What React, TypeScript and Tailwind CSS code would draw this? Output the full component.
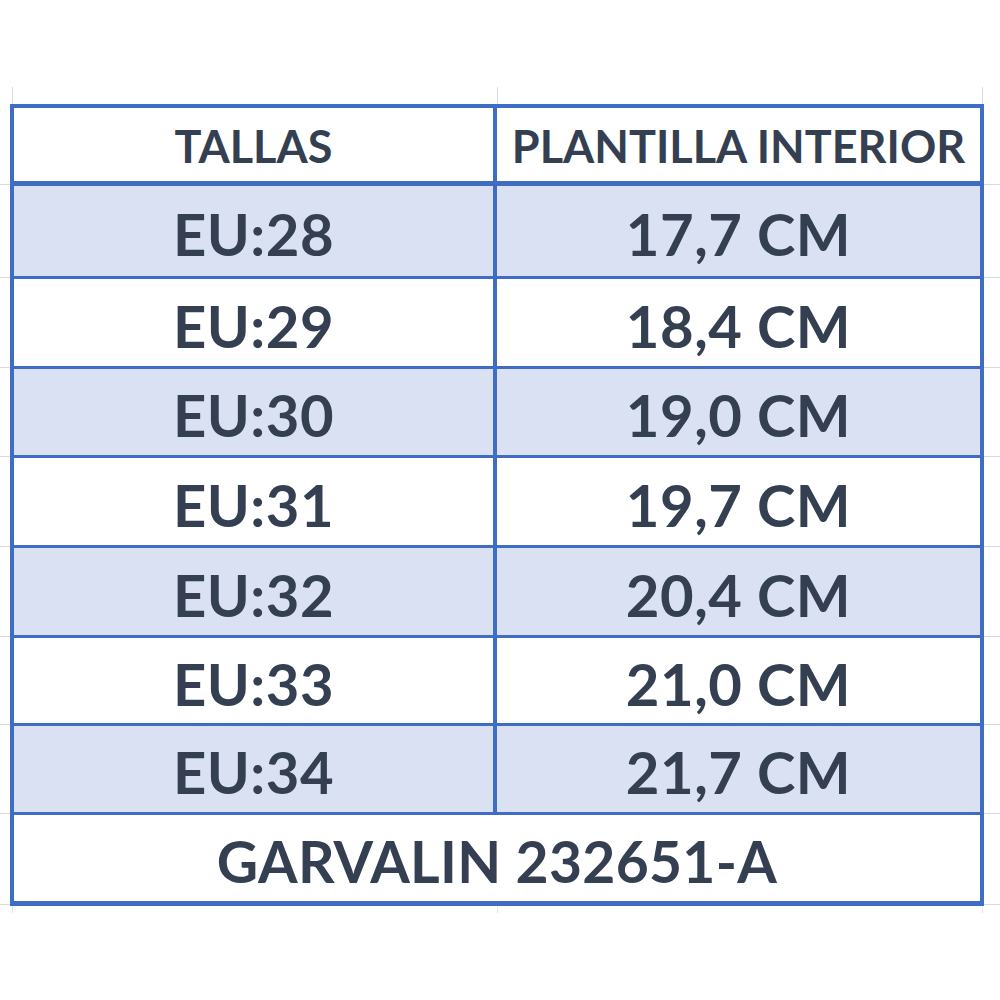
const rows = [
  { talla: "EU:28", plantilla: "17,7 CM", h: "h-[90px]", band: true },
  { talla: "EU:29", plantilla: "18,4 CM", h: "h-[87px]", band: false },
  { talla: "EU:30", plantilla: "19,0 CM", h: "h-[86px]", band: true },
  { talla: "EU:31", plantilla: "19,7 CM", h: "h-[87px]", band: false },
  { talla: "EU:32", plantilla: "20,4 CM", h: "h-[87px]", band: true },
  { talla: "EU:33", plantilla: "21,0 CM", h: "h-[85px]", band: false },
  { talla: "EU:34", plantilla: "21,7 CM", h: "h-[86px]", band: true },
];

function Gutter({ side }: { side: "left" | "right" }) {
  // faint excel gridline that continues the table border outside the table
  return (
    <div className={side === "left" ? "flex w-[10px] flex-col" : "flex flex-1 flex-col"}>
      <div className="flex-1 border-b border-[#d9d9d9]" />
      <div className="h-[1px]" />
    </div>
  );
}

export default function App() {
  return (
    <div className="min-h-screen bg-white pt-[87px] font-['Lato','Open_Sans',sans-serif] font-bold text-[#343f51]">
      {/* gridline stubs above the table */}
      <div className="flex h-[17px]">
        <div className="w-[13px] border-r border-[#dcdcdc]" />
        <div className="w-[485px] border-r border-[#dcdcdc]" />
        <div className="w-[485px] border-r border-[#dcdcdc]" />
      </div>

      {/* header */}
      <div className="flex">
        <Gutter side="left" />
        <div className="grid w-[974px] grid-cols-[483px_1fr] border-x-4 border-t-4 border-b-[5px] border-[#3f6dc6] bg-white">
          <div className="flex h-[73px] items-center justify-center border-r-4 border-[#3f6dc6] pt-1 text-[45px] leading-none">
            TALLAS
          </div>
          <div className="flex h-[73px] items-center justify-center pt-1 text-[45px] leading-none">
            PLANTILLA INTERIOR
          </div>
        </div>
        <Gutter side="right" />
      </div>

      {rows.map((r) => (
        <div key={r.talla} className="flex">
          <Gutter side="left" />
          <div
            className={`grid w-[974px] grid-cols-[483px_1fr] border-x-4 border-b-[3px] border-[#3f6dc6] ${
              r.band ? "bg-[#d9e1f2]" : "bg-white"
            }`}
          >
            <div className={`flex ${r.h} items-center justify-center border-r-4 border-[#3f6dc6] pt-1.5 text-[58px] leading-none tracking-[0.5px]`}>
              {r.talla}
            </div>
            <div className={`flex ${r.h} items-center justify-center pt-1.5 text-[58px] leading-none tracking-[0.5px]`}>
              {r.plantilla}
            </div>
          </div>
          <Gutter side="right" />
        </div>
      ))}

      {/* footer */}
      <div className="flex">
        <Gutter side="left" />
        <div className="flex h-[91px] w-[974px] items-center justify-center border-x-4 border-b-[5px] border-[#3f6dc6] bg-white pt-1.5 text-[57px] leading-none tracking-[0.3px]">
          GARVALIN 232651-A
        </div>
        <Gutter side="right" />
      </div>

      <div className="flex h-[7px]">
        <div className="w-[13px] border-r border-[#e4e4e4]" />
        <div className="w-[485px] border-r border-[#e4e4e4]" />
        <div className="w-[485px] border-r border-[#e4e4e4]" />
      </div>
    </div>
  );
}
